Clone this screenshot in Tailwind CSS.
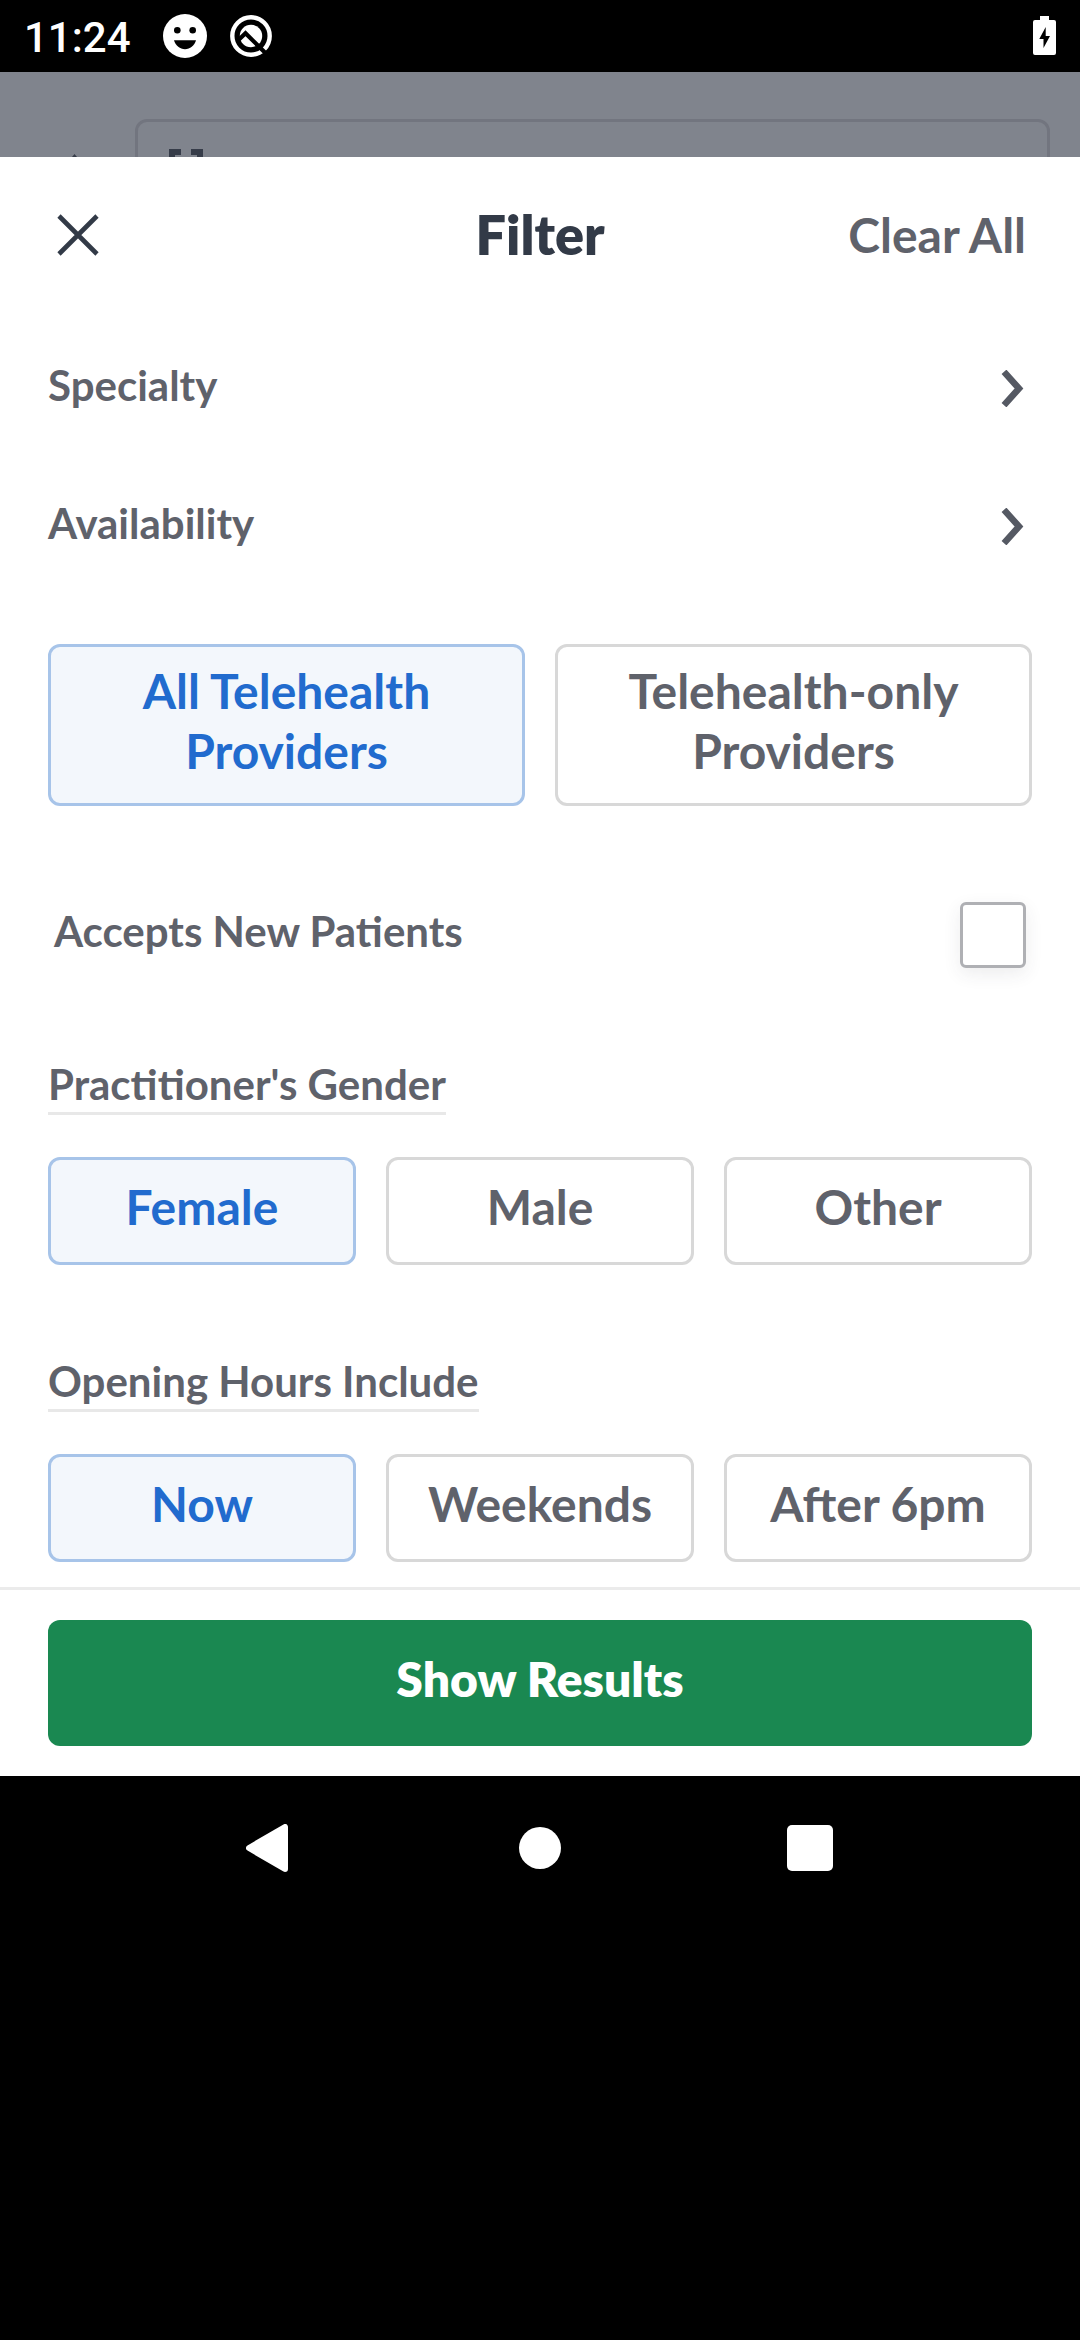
<!DOCTYPE html>
<html lang="en">
<head>
<meta charset="utf-8">
<title>Filter</title>
<script src="https://cdn.jsdelivr.net/npm/@tailwindcss/browser@4"></script>
</head>
<body class="w-[1080px] h-[2340px] bg-black overflow-hidden flex flex-col font-['Lato','Open_Sans',sans-serif] font-bold text-[#5f626b]">

  <!-- Status bar -->
  <header class="h-[72px] shrink-0 flex items-center pl-6 pr-6 text-white">
    <span class="w-[139px] font-['Roboto',sans-serif] font-medium text-[42px] leading-[70px] whitespace-nowrap pt-1">11:24</span>
    <svg class="w-11 h-11 shrink-0" viewBox="0 0 44 44">
      <circle cx="22" cy="22" r="22" fill="#fff"/>
      <circle cx="14.3" cy="16.3" r="3.3" fill="#000"/><circle cx="29.7" cy="16.3" r="3.3" fill="#000"/>
      <path d="M11 26.3h22c-1.600 5.500-6 9-11 9s-9.400-3.500-11-9z" fill="#000"/>
    </svg>
    <svg class="w-[42px] h-[42px] shrink-0 ml-[23px]" viewBox="0 0 42 42">
      <circle cx="21" cy="21" r="18.700" fill="none" stroke="#fff" stroke-width="4.400"/>
      <circle cx="21" cy="21" r="11.200" fill="#fff"/>
      <path d="M9 24.500L15.500 18.300L36.500 39" fill="none" stroke="#000" stroke-width="4.200"/>
    </svg>
    <svg class="w-[23px] h-[39px] shrink-0 ml-auto mt-[-2px]" viewBox="0 0 23 39">
      <path d="M7 0h9v4h5q2 0 2 2v31q0 2-2 2H2q-2 0-2-2V6q0-2 2-2h5z" fill="#fff"/>
      <path d="M12.700 11L6.300 23h4.200v9L17 20h-4.300z" fill="#000"/>
    </svg>
  </header>

  <!-- Dimmed search page behind the sheet -->
  <div class="h-[85px] shrink-0 bg-[#80848d] overflow-hidden flex pt-[47px] pl-[72px] pr-[30px]">
    <svg class="w-[5px] h-[3px] shrink-0 mt-[35px]" viewBox="0 0 5 3"><path d="M0 3L2.500 0L5 3z" fill="#363c49"/></svg>
    <div class="ml-[58px] grow h-[90px] rounded-xl border-3 border-[#72757f] pl-[31px] pt-[27px]">
      <svg class="w-[34px] h-[34px]" viewBox="0 0 34 34"><path d="M12 3H3v9M22 3h9v9" fill="none" stroke="#363c49" stroke-width="6"/></svg>
    </div>
  </div>

  <!-- Filter sheet -->
  <main class="h-[1619px] shrink-0 bg-white flex flex-col">
    <div class="h-[156px] grid grid-cols-3 items-center pl-[54px] pr-[54px]">
      <svg class="w-[42px] h-[42px] ml-[3px]" viewBox="0 0 42 42"><path d="M2 2L40 40M40 2L2 40" fill="none" stroke="#323a47" stroke-width="4.600"/></svg>
      <h1 class="text-[54px] leading-[60px] font-extrabold text-[#323a47] text-center">Filter</h1>
      <span class="text-5xl leading-[60px] text-right">Clear All</span>
    </div>

    <div class="px-12 flex flex-col">
      <div class="mt-[46px] h-[50px] flex justify-between pr-[7px]">
        <span class="text-[42px] leading-[52px]">Specialty</span>
        <svg class="w-6 h-[37px] mt-[11px]" viewBox="0 0 24 37"><path d="M3 1.800L18 18.500L3 35.200" fill="none" stroke="#555963" stroke-width="6.500"/></svg>
      </div>
      <div class="mt-[88px] h-[50px] flex justify-between pr-[7px]">
        <span class="text-[42px] leading-[52px]">Availability</span>
        <svg class="w-6 h-[37px] mt-[11px]" viewBox="0 0 24 37"><path d="M3 1.800L18 18.500L3 35.200" fill="none" stroke="#555963" stroke-width="6.500"/></svg>
      </div>

      <div class="mt-[97px] grid grid-cols-2 gap-[30px] text-5xl leading-[60px] text-center">
        <button class="h-[162px] rounded-xl border-3 border-[#a7c4e9] bg-[#f3f7fc] text-[#216bce] pb-2">All Telehealth<br>Providers</button>
        <button class="h-[162px] rounded-xl border-3 border-[#d8d8d8] pb-2">Telehealth-only<br>Providers</button>
      </div>

      <div class="mt-24 h-[66px] flex justify-between px-1.5">
        <span class="text-[42px] leading-[50px] mt-1">Accepts New Patients</span>
        <span class="size-[66px] rounded-md border-3 border-[#afb0b4] bg-white shadow-[0_6px_18px_rgba(50,58,71,0.09)]"></span>
      </div>

      <h2 class="mt-[90px] w-fit h-[57px] text-[42px] leading-[53px] border-b-3 border-[#e8e8e8]">Practitioner's Gender</h2>
      <div class="mt-[42px] grid grid-cols-3 gap-[30px] text-5xl leading-[60px] text-center">
        <button class="h-[108px] rounded-xl border-3 border-[#a7c4e9] bg-[#f3f7fc] text-[#216bce] pb-2">Female</button>
        <button class="h-[108px] rounded-xl border-3 border-[#d8d8d8] pb-2">Male</button>
        <button class="h-[108px] rounded-xl border-3 border-[#d8d8d8] pb-2">Other</button>
      </div>

      <h2 class="mt-[90px] w-fit h-[57px] text-[42px] leading-[53px] border-b-3 border-[#e8e8e8]">Opening Hours Include</h2>
      <div class="mt-[42px] grid grid-cols-3 gap-[30px] text-5xl leading-[60px] text-center">
        <button class="h-[108px] rounded-xl border-3 border-[#a7c4e9] bg-[#f3f7fc] text-[#216bce] pb-2">Now</button>
        <button class="h-[108px] rounded-xl border-3 border-[#d8d8d8] pb-2">Weekends</button>
        <button class="h-[108px] rounded-xl border-3 border-[#d8d8d8] pb-2">After 6pm</button>
      </div>
    </div>

    <div class="mt-auto h-[189px] border-t-3 border-[#ebebeb] px-12 pt-[30px]">
      <button class="w-full h-[126px] rounded-xl bg-[#1a8851] text-white text-5xl leading-[60px] font-extrabold pb-2">Show Results</button>
    </div>
  </main>

  <!-- Navigation bar -->
  <nav class="h-36 shrink-0 flex items-center justify-between pl-[246px] pr-[247px]">
    <svg class="w-[42px] h-12" viewBox="0 0 42 48"><path d="M39 3v42L3 24z" fill="#fff" stroke="#fff" stroke-width="6" stroke-linejoin="round"/></svg>
    <span class="size-[42px] ml-[5px] rounded-full bg-white"></span>
    <span class="size-[46px] rounded-[5px] bg-white"></span>
  </nav>
</body>
</html>
